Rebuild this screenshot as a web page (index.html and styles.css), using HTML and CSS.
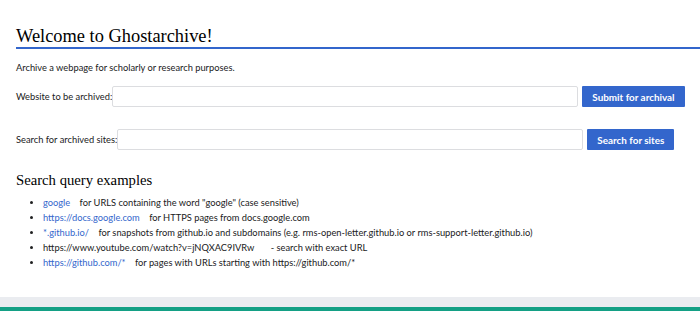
FILE: index.html
```html
<!DOCTYPE html>
<html lang="en">
<head>
<meta charset="utf-8">
<title>Ghostarchive</title>
<link rel="stylesheet" href="styles.css">
</head>
<body>
<div class="page">
  <h1 class="title">Welcome to Ghostarchive!</h1>
  <p class="intro">Archive a webpage for scholarly or research purposes.</p>
  <form class="row row-first">
    <label class="label">Website to be archived:</label><input class="field field-archive" type="text"> <button class="btn btn-archive" type="button">Submit for archival</button>
  </form>
  <form class="row row-second">
    <label class="label">Search for archived sites:</label><input class="field field-search" type="text"> <button class="btn btn-search" type="button">Search for sites</button>
  </form>
  <h2 class="subtitle">Search query examples</h2>
  <ul class="examples">
    <li><a class="ex-link" href="#">google</a> for URLS containing the word "google" (case sensitive)</li>
    <li><a class="ex-link" href="#">https://docs.google.com</a> for HTTPS pages from docs.google.com</li>
    <li><a class="ex-link" href="#">*.github.io/</a> for snapshots from github.io and subdomains (e.g. rms-open-letter.github.io or rms-support-letter.github.io)</li>
    <li><span class="ex-plain">https://www.youtube.com/watch?v=jNQXAC9IVRw</span> - search with exact URL</li>
    <li><a class="ex-link" href="#">https://github.com/*</a> for pages with URLs starting with https://github.com/*</li>
  </ul>
</div>
<footer class="footer"></footer>
</body>
</html>
```
FILE: styles.css
```css
html, body {
  margin: 0;
  padding: 0;
  background: #ffffff;
}
body {
  font-family: "Lato", "Noto Sans", sans-serif;
  font-size: 9.3px;
  color: #202122;
  overflow: hidden;
}
.page {
  padding: 0 0 0 16px;
}
.title {
  font-family: "Liberation Serif", serif;
  font-weight: normal;
  font-size: 18.4px;
  line-height: 21px;
  margin: 26px 0 0 0;
  border-bottom: 2px solid #3366cc;
  color: #000;
}
.intro {
  margin: 11px 0 0 0;
  line-height: 15px;
}
.row {
  margin: 0;
  display: flex;
  align-items: center;
  height: 21px;
}
.row-first { margin-top: 11px; }
.row-second { margin-top: 22px; }
.label {
  white-space: nowrap;
}
.field {
  box-sizing: border-box;
  width: 466px;
  height: 21px;
  border: 1px solid #dcdde0;
  border-radius: 2px;
  padding: 0 4px;
  margin: 0 4px 0 0;
  background: #fff;
  font: inherit;
}
.btn {
  box-sizing: border-box;
  height: 21px;
  border: none;
  background: #3366cc;
  color: #fff;
  font-family: inherit;
  font-weight: bold;
  font-size: 9.9px;
  padding: 0 10px;
  border-radius: 1px;
  white-space: nowrap;
}
.subtitle {
  font-family: "Liberation Serif", serif;
  font-weight: normal;
  font-size: 14.7px;
  line-height: 18px;
  margin: 21px 0 0 0;
  color: #000;
}
.examples {
  margin: 6px 0 0 0;
  padding-left: 27px;
  line-height: 15px;
}
.ex-link {
  color: #3366cc;
  text-decoration: none;
  margin-right: 7px;
}
.ex-plain {
  margin-right: 14px;
}
.footer {
  margin-top: 27px;
  height: 10px;
  background: #eaecf0;
  border-bottom: 4px solid #14a085;
}
```
